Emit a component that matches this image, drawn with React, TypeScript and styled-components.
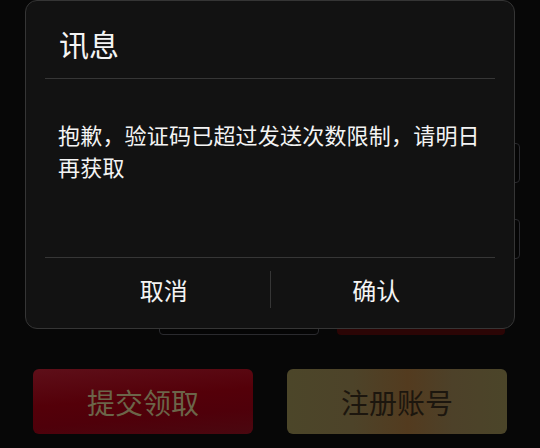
import React from 'react';
import styled, { createGlobalStyle } from 'styled-components';

const GlobalStyle = createGlobalStyle`
  html, body {
    margin: 0;
    padding: 0;
    background: #070707;
    font-family: "Noto Sans CJK SC", "Noto Sans", sans-serif;
  }
  * {
    box-sizing: border-box;
  }
`;

const Page = styled.div`
  position: relative;
  width: 540px;
  height: 448px;
  overflow: hidden;
  background: #070707;
`;

const Form = styled.div`
  display: flex;
  flex-direction: column;
  gap: 36px;
  padding: 143px 20px 0 33px;
`;

const Row = styled.div`
  display: flex;
  align-items: center;
  gap: 18px;
  height: 40px;
  padding-left: 126px;
`;

const Field = styled.div<{ $width?: number }>`
  height: 40px;
  flex: ${p => (p.$width ? `0 0 ${p.$width}px` : '1')};
  border: 1px solid #2a2a2e;
  border-radius: 4px;
  background: #050505;
`;

const SendButton = styled.div`
  width: 168px;
  height: 40px;
  border-radius: 4px;
  background: #2b0505;
`;

const ButtonBar = styled.div`
  display: flex;
  gap: 34px;
  padding: 0 33px;
  margin-top: 34px;
`;

const BigButton = styled.div<{ $kind: 'red' | 'gold' }>`
  flex: 1;
  height: 65px;
  border-radius: 6px;
  display: flex;
  align-items: center;
  justify-content: center;
  font-size: 28px;
  color: ${p => (p.$kind === 'red' ? '#6b6549' : '#1c160e')};
  background: ${p =>
    p.$kind === 'red'
      ? 'linear-gradient(175deg, #5e0f19 0%, #540009 45%, #4f000a 70%, #4a0810 100%)'
      : 'linear-gradient(90deg, #4c4629 0%, #4d4329 30%, #533b1f 55%, #4d4129 75%, #4b4529 100%)'};
`;

const Dialog = styled.div`
  position: absolute;
  left: 25px;
  top: 0;
  width: 490px;
  height: 329px;
  background: #121212;
  border: 1px solid #353535;
  border-radius: 12px;
  display: flex;
  flex-direction: column;
  color: #f4f4f4;
`;

const Title = styled.div`
  font-size: 30px;
  line-height: 44px;
  padding: 20px 33px 13px;
`;

const Divider = styled.div`
  height: 1px;
  margin: 0 19px;
  background: #363636;
`;

const Body = styled.div`
  flex: 1;
  font-size: 22px;
  line-height: 32px;
  letter-spacing: 0.2px;
  padding: 39px 31px 0 32px;
`;

const Footer = styled.div`
  height: 70px;
  display: flex;
  align-items: center;
  padding: 0 32px 7px;
`;

const FooterButton = styled.div`
  flex: 1;
  text-align: center;
  font-size: 24px;
  line-height: 36px;
`;

const VSep = styled.div`
  width: 1px;
  height: 37px;
  background: #363636;
`;

export default function App() {
  return (
    <Page>
      <GlobalStyle />
      <Form>
        <Row>
          <Field />
        </Row>
        <Row>
          <Field />
        </Row>
        <Row>
          <Field $width={160} />
          <SendButton />
        </Row>
      </Form>
      <ButtonBar>
        <BigButton $kind="red">提交领取</BigButton>
        <BigButton $kind="gold">注册账号</BigButton>
      </ButtonBar>
      <Dialog>
        <Title>讯息</Title>
        <Divider />
        <Body>抱歉，验证码已超过发送次数限制，请明日再获取</Body>
        <Divider />
        <Footer>
          <FooterButton>取消</FooterButton>
          <VSep />
          <FooterButton>确认</FooterButton>
        </Footer>
      </Dialog>
    </Page>
  );
}
